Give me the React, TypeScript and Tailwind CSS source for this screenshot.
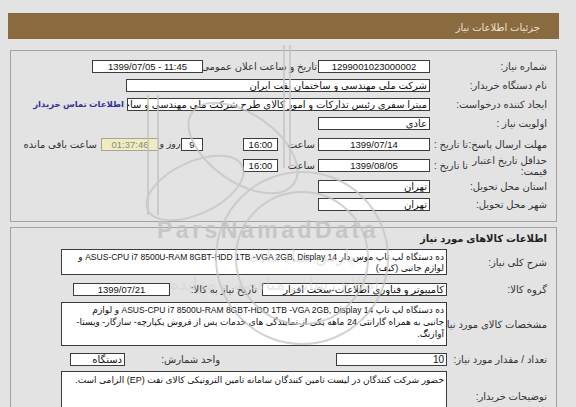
import React from "react";

// خانه‌های ورودی فرم با حاشیه تیره
function Field({ className = "", ltr = false, children }: { className?: string; ltr?: boolean; children?: React.ReactNode }) {
  return (
    <div
      dir={ltr ? "ltr" : undefined}
      className={`h-[13px] shrink-0 bg-white border border-[#3c3c3c] leading-[11px] text-[#111] px-[2px] overflow-hidden whitespace-nowrap ${ltr ? "text-[9.5px]" : "text-[10px]"} ${className}`}
    >
      {children}
    </div>
  );
}

function Row({ h, label, labelWidth = "w-[117px]", children }: { h: string; label: React.ReactNode; labelWidth?: string; children?: React.ReactNode }) {
  return (
    <div className={`flex items-center ${h}`}>
      <div className={`${labelWidth} shrink-0 whitespace-nowrap text-[#333]`}>{label}</div>
      {children}
    </div>
  );
}

// متن لاتین داخل توضیحات کمی ریزتر است
function Lat({ children }: { children: React.ReactNode }) {
  return <span className="text-[8.5px]">{children}</span>;
}

function Watermark() {
  return (
    <div className="pointer-events-none absolute inset-0">
      <svg width="576" height="407" className="absolute left-0 top-0" fill="none" stroke="#c4c4c4" strokeWidth="2" opacity="0.75">
        <line x1="148" y1="95" x2="148" y2="215" />
        <line x1="158" y1="95" x2="158" y2="215" />
        <line x1="284" y1="45" x2="284" y2="168" />
        <line x1="290" y1="45" x2="290" y2="168" />
        <circle cx="302" cy="258" r="86" />
        <circle cx="302" cy="258" r="66" />
        <ellipse cx="243" cy="148" rx="62" ry="34" transform="rotate(35 243 148)" />
        <ellipse cx="195" cy="188" rx="52" ry="26" transform="rotate(-25 195 188)" />
      </svg>
      <div className="absolute left-[157px] top-[213px] font-['Liberation_Sans',sans-serif] text-[23px] font-bold tracking-[3.5px] text-[#c0c0c0] opacity-80">
        ParsNamadData
      </div>
      <div className="absolute left-[250px] top-[244px] text-[17px] text-[#d2d2d2] opacity-50">پارس نماد داده</div>
      <div className="absolute left-[170px] top-[272px] text-[17px] text-[#d2d2d2] opacity-50">اطلاع رسانی مناقصه و مزایده</div>
    </div>
  );
}

export default function App() {
  return (
    <div
      dir="rtl"
      className="relative w-[576px] h-[407px] overflow-hidden bg-[#e3e3e3] pt-[13px] pl-[8px] pr-[17px] font-['Liberation_Sans','DejaVu_Sans',sans-serif] text-[10px]"
    >
      <div className="h-[26px] bg-[#8a6a3f] pr-[19px] pt-[3px] flex items-center text-[#efe3cf]">جزئیات اطلاعات نیاز</div>

      {/* مشخصات کلی نیاز */}
      <section className="mx-[2px] mt-[11px] h-[172px] border border-[#a2a2a2] pr-[9px] pt-[5px]">
        <Row h="h-[20px]" label="شماره نیاز:">
          <Field ltr className="w-[112px] text-center">1299001023000002</Field>
          <div className="w-[115px] shrink-0 pr-[1px] whitespace-nowrap text-[#333]">تاریخ و ساعت اعلان عمومی:</div>
          <Field ltr className="w-[111px] text-center">1399/07/05 - 11:45</Field>
        </Row>
        <Row h="h-[19px]" label="نام دستگاه خریدار:">
          <Field className="w-[304px]">شرکت ملی مهندسی و ساختمان نفت ایران</Field>
        </Row>
        <Row h="h-[19px]" label="ایجاد کننده درخواست:">
          <Field className="w-[303px]">میترا سفری رئیس تدارکات و امور کالای طرح شرکت ملی مهندسی و ساختمان</Field>
          <span className="ms-[3px] whitespace-nowrap text-[8.5px] font-bold text-[#34349c]">اطلاعات تماس خریدار</span>
        </Row>
        <Row h="h-[19px]" label="اولویت نیاز :">
          <Field className="w-[112px]">عادی</Field>
        </Row>
        <Row
          h="h-[22px]"
          label={
            <div className="flex justify-between pl-[4px]">
              <span>مهلت ارسال پاسخ:</span>
              <span>تا تاریخ :</span>
            </div>
          }
        >
          <Field ltr className="w-[112px] text-center">1399/07/14</Field>
          <div className="w-[40px] shrink-0 pr-[3px] text-[#333]">ساعت</div>
          <Field ltr className="w-[35px] text-center">16:00</Field>
          <div className="w-[40px] shrink-0" />
          <Field ltr className="w-[22px] text-center">9</Field>
          <div className="w-[22px] shrink-0 whitespace-nowrap text-center text-[9.5px] text-[#333]">روز و</div>
          <Field ltr className="w-[58px] text-center !bg-[#efecc5] !text-[#8d8a6c] !border-[#a9a68a]">01:37:46</Field>
          <span className="ms-[4px] whitespace-nowrap text-[#333]">ساعت باقی مانده</span>
        </Row>
        <Row
          h="h-[21px]"
          label={
            <div className="flex items-center justify-between pl-[4px]">
              <div className="leading-[11px]">
                <div>حداقل تاریخ اعتبار</div>
                <div>قیمت:</div>
              </div>
              <span>تا تاریخ :</span>
            </div>
          }
        >
          <Field ltr className="w-[112px] text-center">1399/08/05</Field>
          <div className="w-[40px] shrink-0 pr-[3px] text-[#333]">ساعت</div>
          <Field ltr className="w-[35px] text-center">16:00</Field>
        </Row>
        <Row h="h-[20px]" label="استان محل تحویل:">
          <Field className="w-[112px]">تهران</Field>
        </Row>
        <Row h="h-[16px]" label="شهر محل تحویل:">
          <Field className="w-[112px]">تهران</Field>
        </Row>
      </section>

      {/* کالاهای مورد نیاز */}
      <section className="mx-[2px] mt-[5px] h-[200px] border border-[#a2a2a2] pr-[9px]">
        <div className="h-[21px] flex items-center font-bold text-[#222]">اطلاعات کالاهای مورد نیاز</div>

        <Row h="h-[26px]" labelWidth="w-[100px]" label="شرح کلی نیاز:">
          <Field className="w-[386px] !h-[26px] pt-[2px] !text-[9px]">
            <div>
              ده دستگاه لپ تاپ موس دار <Lat>ASUS-CPU i7 8500U-RAM 8GBT-HDD 1TB -VGA 2GB, Display 14</Lat> و
            </div>
            <div>لوازم جانبی (کیف)</div>
          </Field>
        </Row>

        <div className="mt-[4px]">
          <Row h="h-[21px]" labelWidth="w-[100px]" label="گروه کالا:">
            <Field className="w-[185px]">کامپیوتر و فناوری اطلاعات-سخت افزار</Field>
            <div className="w-[92px] shrink-0 pr-[5px] whitespace-nowrap text-[#333]">تاریخ نیاز به کالا:</div>
            <Field ltr className="w-[97px] text-center">1399/07/21</Field>
          </Row>
        </div>

        <div className="mt-[2px]">
          <Row h="h-[44px]" labelWidth="w-[100px]" label="مشخصات کالای مورد نیاز:">
            <Field className="w-[386px] !h-[44px] !leading-[12px] pt-[1px] !text-[9px]">
              <div>
                ده دستگاه لپ تاپ <Lat>ASUS-CPU i7 8500U-RAM 8GBT-HDD 1TB -VGA 2GB, Display 14</Lat> و لوازم
              </div>
              <div>جانبی به همراه گارانتی 24 ماهه یکی از نمایندگی های خدمات پس از فروش یکپارچه- سازگار- ویستا-</div>
              <div>آوازنگ.</div>
            </Field>
          </Row>
        </div>

        <div className="mt-[4px]">
          <Row h="h-[19px]" labelWidth="w-[100px]" label="تعداد / مقدار مورد نیاز:">
            <Field className="w-[111px]">10</Field>
            <div className="w-[116px] shrink-0" />
            <div className="w-[95px] shrink-0 whitespace-nowrap text-[#333]">واحد شمارش:</div>
            <Field className="w-[55px]">دستگاه</Field>
          </Row>
        </div>

        <div className="mt-[2px]">
          <Row h="h-[50px]" labelWidth="w-[100px]" label="توضیحات خریدار:">
            <Field className="w-[386px] !h-[50px] pt-[3px] !text-[9px]">
              حضور شرکت کنندگان در لیست تامین کنندگان سامانه تامین الترونیکی کالای نفت (EP) الزامی است.
            </Field>
          </Row>
        </div>
      </section>

      <Watermark />
    </div>
  );
}
